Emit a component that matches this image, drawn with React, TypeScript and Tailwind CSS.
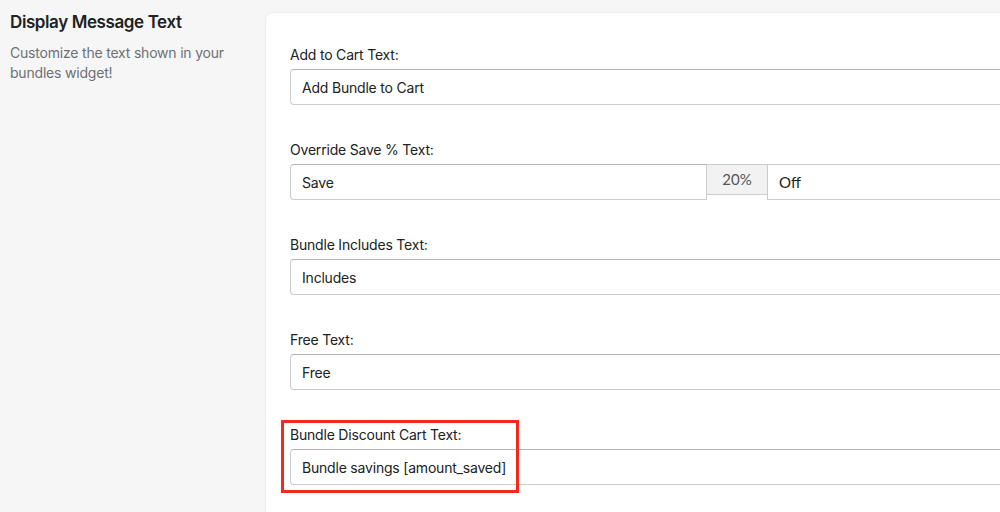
import React from "react";

const inter = { fontFamily: "Inter, 'Noto Sans', sans-serif" };

function Field({ label, value }: { label: string; value: string }) {
  return (
    <div className="mb-[35px]">
      <div className="text-[14px] leading-[20px] tracking-[-0.2px] text-[#202223]">{label}</div>
      <div className="mt-[4px] h-[36px] w-full rounded-[4px] border border-[#c9cccf] border-t-[#aeb4b9] bg-white px-[11px] flex items-center text-[14px] tracking-[-0.2px] text-[#202223]">
        {value}
      </div>
    </div>
  );
}

export default function App() {
  return (
    <div className="w-[1000px] h-[512px] overflow-hidden bg-[#f6f6f7] flex" style={inter}>
      <div className="w-[266px] shrink-0 pl-[10px] pt-[12px] pr-[20px]">
        <div className="text-[17px] leading-[20px] font-semibold tracking-[-0.4px] text-[#202223]">Display Message Text</div>
        <div className="mt-[11px] text-[14px] leading-[20px] tracking-[-0.2px] text-[#6d7175]">
          Customize the text shown in your bundles widget!
        </div>
      </div>
      <div className="mt-[13px] w-[780px] shrink-0 bg-white rounded-tl-[6px] shadow-[0_0_2px_rgba(0,0,0,0.12)] pl-[24px] pt-[32px]">
        <Field label="Add to Cart Text:" value="Add Bundle to Cart" />
        <div className="mb-[35px]">
          <div className="text-[14px] leading-[20px] tracking-[-0.2px] text-[#202223]">Override Save % Text:</div>
          <div className="mt-[4px] flex items-start">
            <div className="h-[36px] w-[417px] shrink-0 rounded-l-[4px] border border-[#c9cccf] border-t-[#aeb4b9] px-[11px] flex items-center text-[14px] tracking-[-0.2px] text-[#202223]">
              Save
            </div>
            <div
              className="h-[31px] w-[62px] shrink-0 -ml-px bg-[#f2f2f2] border border-[#cccccc] flex items-center justify-center text-[15px] text-[#555555]"
              style={{ fontFamily: "Lato, sans-serif" }}
            >
              20%
            </div>
            <div
              className="h-[36px] flex-1 -ml-px border border-[#cccccc] px-[11px] flex items-center text-[15px] text-[#202223]"
              style={{ fontFamily: "Lato, sans-serif" }}
            >
              Off
            </div>
          </div>
        </div>
        <Field label="Bundle Includes Text:" value="Includes" />
        <Field label="Free Text:" value="Free" />
        <div className="relative">
          <div className="absolute left-[-9px] top-[-5px] w-[238px] h-[73px] border-[3px] border-[#f5281c] pointer-events-none" />
          <Field label="Bundle Discount Cart Text:" value="Bundle savings [amount_saved]" />
        </div>
      </div>
    </div>
  );
}
